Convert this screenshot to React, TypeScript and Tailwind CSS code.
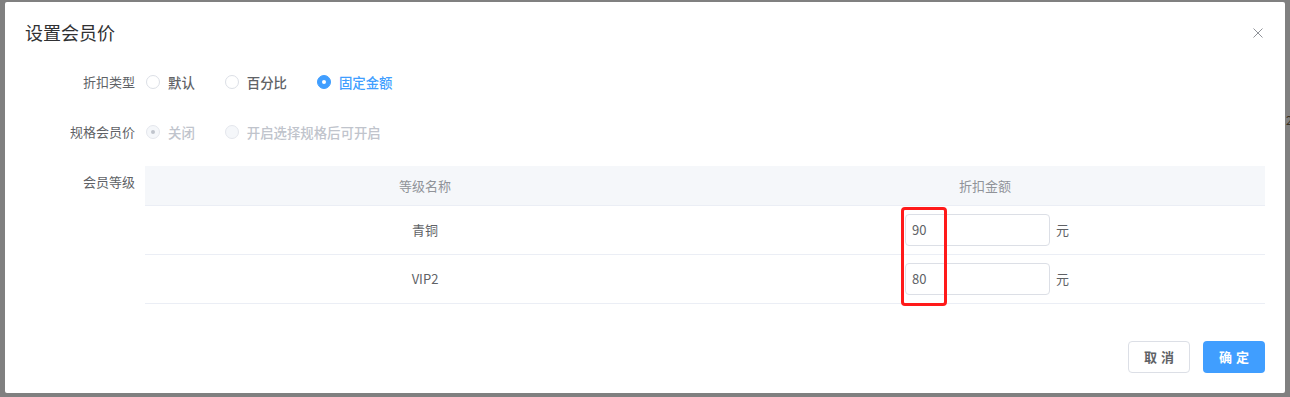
import React from "react";

const font = { fontFamily: '"Noto Sans CJK SC", "Noto Sans", sans-serif' };

function Radio({
  checked,
  disabled,
  label,
}: {
  checked?: boolean;
  disabled?: boolean;
  label: string;
}) {
  let circle = "border-[#dcdfe6] bg-white";
  let text = "text-[#606266]";
  if (checked && !disabled) {
    circle = "border-[#409eff] bg-[#409eff]";
    text = "text-[#409eff]";
  } else if (disabled) {
    circle = "border-[#e4e7ed] bg-[#f5f7fa]";
    text = "text-[#c0c4cc]";
  }
  return (
    <label className="flex items-center mr-[30px]">
      <span
        className={`w-[14px] h-[14px] rounded-full border flex items-center justify-center ${circle}`}
      >
        {checked && (
          <span
            className={`w-[4px] h-[4px] rounded-full ${disabled ? "bg-[#c0c4cc]" : "bg-white"}`}
          />
        )}
      </span>
      <span className={`ml-[8px] text-[13.4px] font-medium ${text}`}>{label}</span>
    </label>
  );
}

export default function App() {
  const rows = [
    { name: "青铜", value: "90" },
    { name: "VIP2", value: "80" },
  ];
  return (
    <div
      className="relative w-[1290px] h-[397px] bg-[#808080] pt-[2px] pl-[5px] overflow-hidden"
      style={font}
    >
      <span className="absolute left-[1286px] top-[114px] text-[12px] leading-none text-[#3a3020]">
        2
      </span>
      <div className="relative w-[1280px] h-[391px] bg-white rounded-[2px] flex flex-col">
        <div className="px-5 pt-[18px] pb-[12px]">
          <div className="text-[18px] leading-6 text-[#303133]">设置会员价</div>
          <svg
            className="absolute top-[26px] right-[22px] w-[10px] h-[10px]"
            viewBox="0 0 10 10"
          >
            <path d="M0.5 0.5 L9.5 9.5 M9.5 0.5 L0.5 9.5" stroke="#909399" strokeWidth="1" />
          </svg>
        </div>
        <div className="px-5 pt-[10px]">
          <div className="flex items-center h-[32px] mb-[18px]">
            <div className="w-[120px] pr-[10px] text-right text-[13px] text-[#606266]">
              折扣类型
            </div>
            <div className="flex items-center pl-[1px]">
              <Radio label="默认" />
              <Radio label="百分比" />
              <Radio label="固定金额" checked />
            </div>
          </div>
          <div className="flex items-center h-[32px] mb-[18px]">
            <div className="w-[120px] pr-[10px] text-right text-[13px] text-[#606266]">
              规格会员价
            </div>
            <div className="flex items-center pl-[1px]">
              <Radio label="关闭" checked disabled />
              <Radio label="开启选择规格后可开启" disabled />
            </div>
          </div>
          <div className="flex items-start">
            <div className="w-[120px] pr-[10px] text-right text-[13px] leading-[32px] text-[#606266]">
              会员等级
            </div>
            <div className="flex-1 text-[13px]">
              <div className="grid grid-cols-2 h-[40px] bg-[#f5f7fa] border-b border-[#ebeef5] text-[#909399]">
                <div className="flex items-center justify-center">等级名称</div>
                <div className="flex items-center justify-center">折扣金额</div>
              </div>
              {rows.map((r) => (
                <div
                  key={r.name}
                  className="grid grid-cols-2 h-[49px] border-b border-[#ebeef5] text-[#606266]"
                >
                  <div className="flex items-center justify-center">{r.name}</div>
                  <div className="flex items-center justify-center pl-[4px]">
                    <div className="w-[145px] h-[32px] border border-[#dcdfe6] rounded-[4px] px-[6px] flex items-center text-[13px] text-[#606266]">
                      {r.value}
                    </div>
                    <span className="ml-[6px]">元</span>
                  </div>
                </div>
              ))}
            </div>
          </div>
        </div>
        <div className="mt-auto px-5 pb-5 flex justify-end gap-[13px]">
          <button className="w-[62px] h-[32px] border border-[#dcdfe6] rounded-[4px] bg-white text-[13px] font-bold text-[#606266] tracking-[4px] pl-[4px]">
            取消
          </button>
          <button className="w-[62px] h-[32px] rounded-[4px] bg-[#409eff] text-[13px] font-bold text-white tracking-[4px] pl-[4px]">
            确定
          </button>
        </div>
      </div>
      <div className="absolute left-[901px] top-[207px] w-[46px] h-[99px] border-[3px] border-[#ff1a1a] rounded-[4px]" />
    </div>
  );
}
